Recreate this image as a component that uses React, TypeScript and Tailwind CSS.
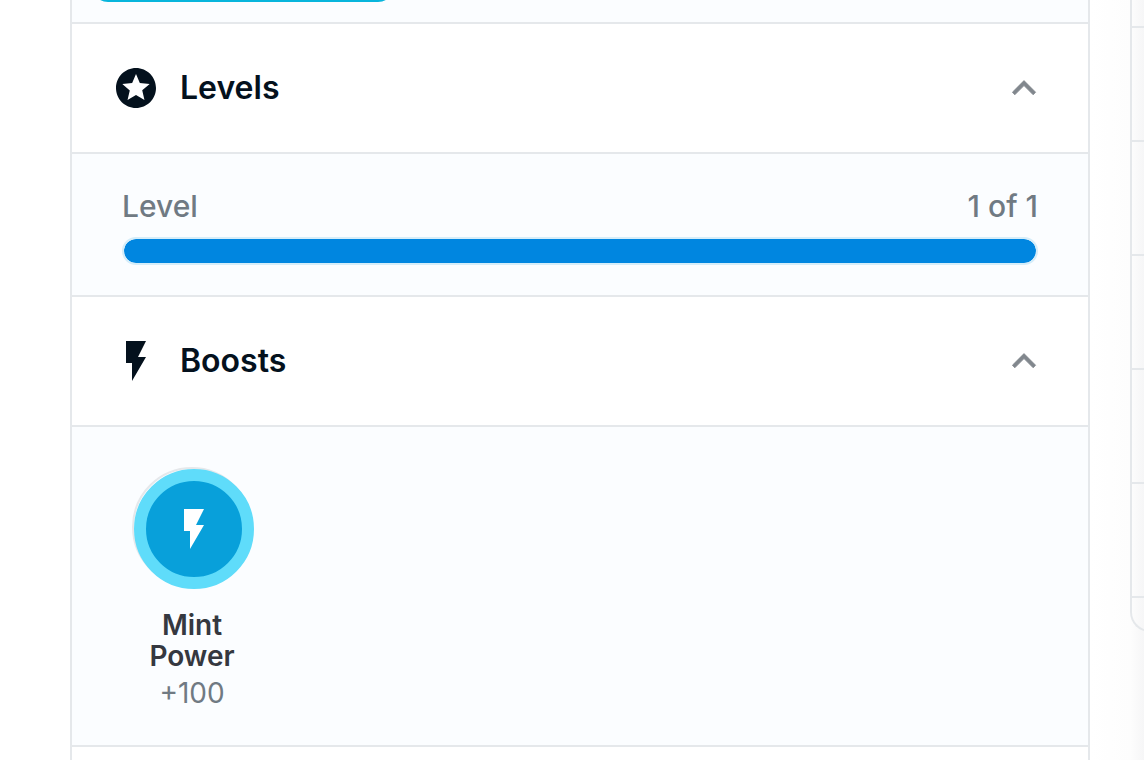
import { useState } from "react";
import type { ReactNode } from "react";
import { MdFlashOn, MdStars } from "react-icons/md";

type SectionProps = {
  title: string;
  icon: ReactNode;
  children: ReactNode;
};

function Chevron({ open }: { open: boolean }) {
  return (
    <svg
      viewBox="0 0 24 24"
      className={`h-12 w-12 text-[#81878d] ${open ? "" : "rotate-180"}`}
      fill="currentColor"
      stroke="currentColor"
      strokeWidth="0.4"
      strokeLinejoin="round"
      aria-hidden="true"
    >
      <path d="M12 8.3 6.2 14.1 7.4 15.4 12 10.8 16.6 15.4 17.8 14.1Z" />
    </svg>
  );
}

function Section({ title, icon, children }: SectionProps) {
  const [open, setOpen] = useState(true);

  return (
    <section>
      <h2>
        <button
          type="button"
          aria-expanded={open}
          onClick={() => setOpen(!open)}
          className="flex w-full items-center border-b-2 border-[#e5e8eb] bg-white px-10 py-10 text-left"
        >
          {icon}
          <span className="ml-5 flex-1 text-[32px] leading-[48px] font-semibold text-[#04111d]">
            {title}
          </span>
          <Chevron open={open} />
        </button>
      </h2>
      {open && <div className="border-b-2 border-[#e5e8eb] bg-[#fbfdff]">{children}</div>}
    </section>
  );
}

function LevelBar({ label, value, max }: { label: string; value: number; max: number }) {
  return (
    <div className="px-[50px] pt-[31px] pb-[30px]">
      <div className="mb-[10px] flex justify-between text-[30px] leading-[42px] font-medium text-[#707a83]">
        <span>{label}</span>
        <span>
          {value} of {max}
        </span>
      </div>
      <div
        role="progressbar"
        aria-label={label}
        aria-valuenow={value}
        aria-valuemax={max}
        className="h-7 overflow-hidden rounded-full border-2 border-[#d5edf9]"
      >
        <div
          className="h-full rounded-full bg-[#0086e0]"
          style={{ width: `${(value / max) * 100}%` }}
        />
      </div>
    </div>
  );
}

function Boost({ name, amount }: { name: string; amount: string }) {
  return (
    <div className="w-[120px] text-center">
      <div className="h-[120px] w-[120px] rounded-full border-2 border-[#e5e8eb]">
        <div className="flex h-[120px] w-[120px] items-center justify-center rounded-full border-12 border-[#5fdcfa] bg-[#08a0da]">
          <MdFlashOn className="h-12 w-12 text-white" />
        </div>
      </div>
      <p className="mt-[23px] px-3 text-[28px] leading-[31px] font-semibold text-[#353840]">
        {name}
      </p>
      <p className="text-[28px] leading-[42px] text-[#707a83]">{amount}</p>
    </div>
  );
}

function App() {
  const rows = [0, 1, 2, 3, 4];

  return (
    <div className="flex min-h-screen overflow-hidden bg-white pl-[70px] font-[Inter,'Noto_Sans',sans-serif]">
      <main className="min-w-0 flex-1 border-x-2 border-[#e5e8eb]">
        {/* Only the bottom edge of the card above is in view */}
        <div className="flex h-6 items-start overflow-hidden border-b-2 border-[#e5e8eb] bg-[#fbfdff] px-5">
          <div className="-mt-[18px] h-5 w-[302px] rounded-b-[16px] bg-[#08b5dc]" />
        </div>
        <Section
          title="Levels"
          icon={<MdStars className="h-12 w-12 text-[#04111d]" />}
        >
          <LevelBar label="Level" value={1} max={1} />
        </Section>
        <Section
          title="Boosts"
          icon={<MdFlashOn className="h-12 w-12 text-[#04111d]" />}
        >
          <div className="flex px-[60px] pt-10 pb-[31px]">
            <Boost name="Mint Power" amount="+100" />
          </div>
        </Section>
      </main>

      {/* Side list runs off the right edge and fades out */}
      <aside className="w-[54px] shrink-0 overflow-hidden bg-linear-to-r from-white via-[#fdfdfd] via-75% to-[#f6f6f7] pl-10">
        <div className="w-[320px] rounded-bl-[20px] border-b-2 border-l-2 border-[#e5e8eb]">
          <div className="h-7 border-b-2 border-[#e5e8eb]" />
          {rows.map((row) => (
            <div key={row} className="h-[114px] border-b-2 border-[#e5e8eb]" />
          ))}
          <div className="h-[32px]" />
        </div>
      </aside>
    </div>
  );
}

export default App;
